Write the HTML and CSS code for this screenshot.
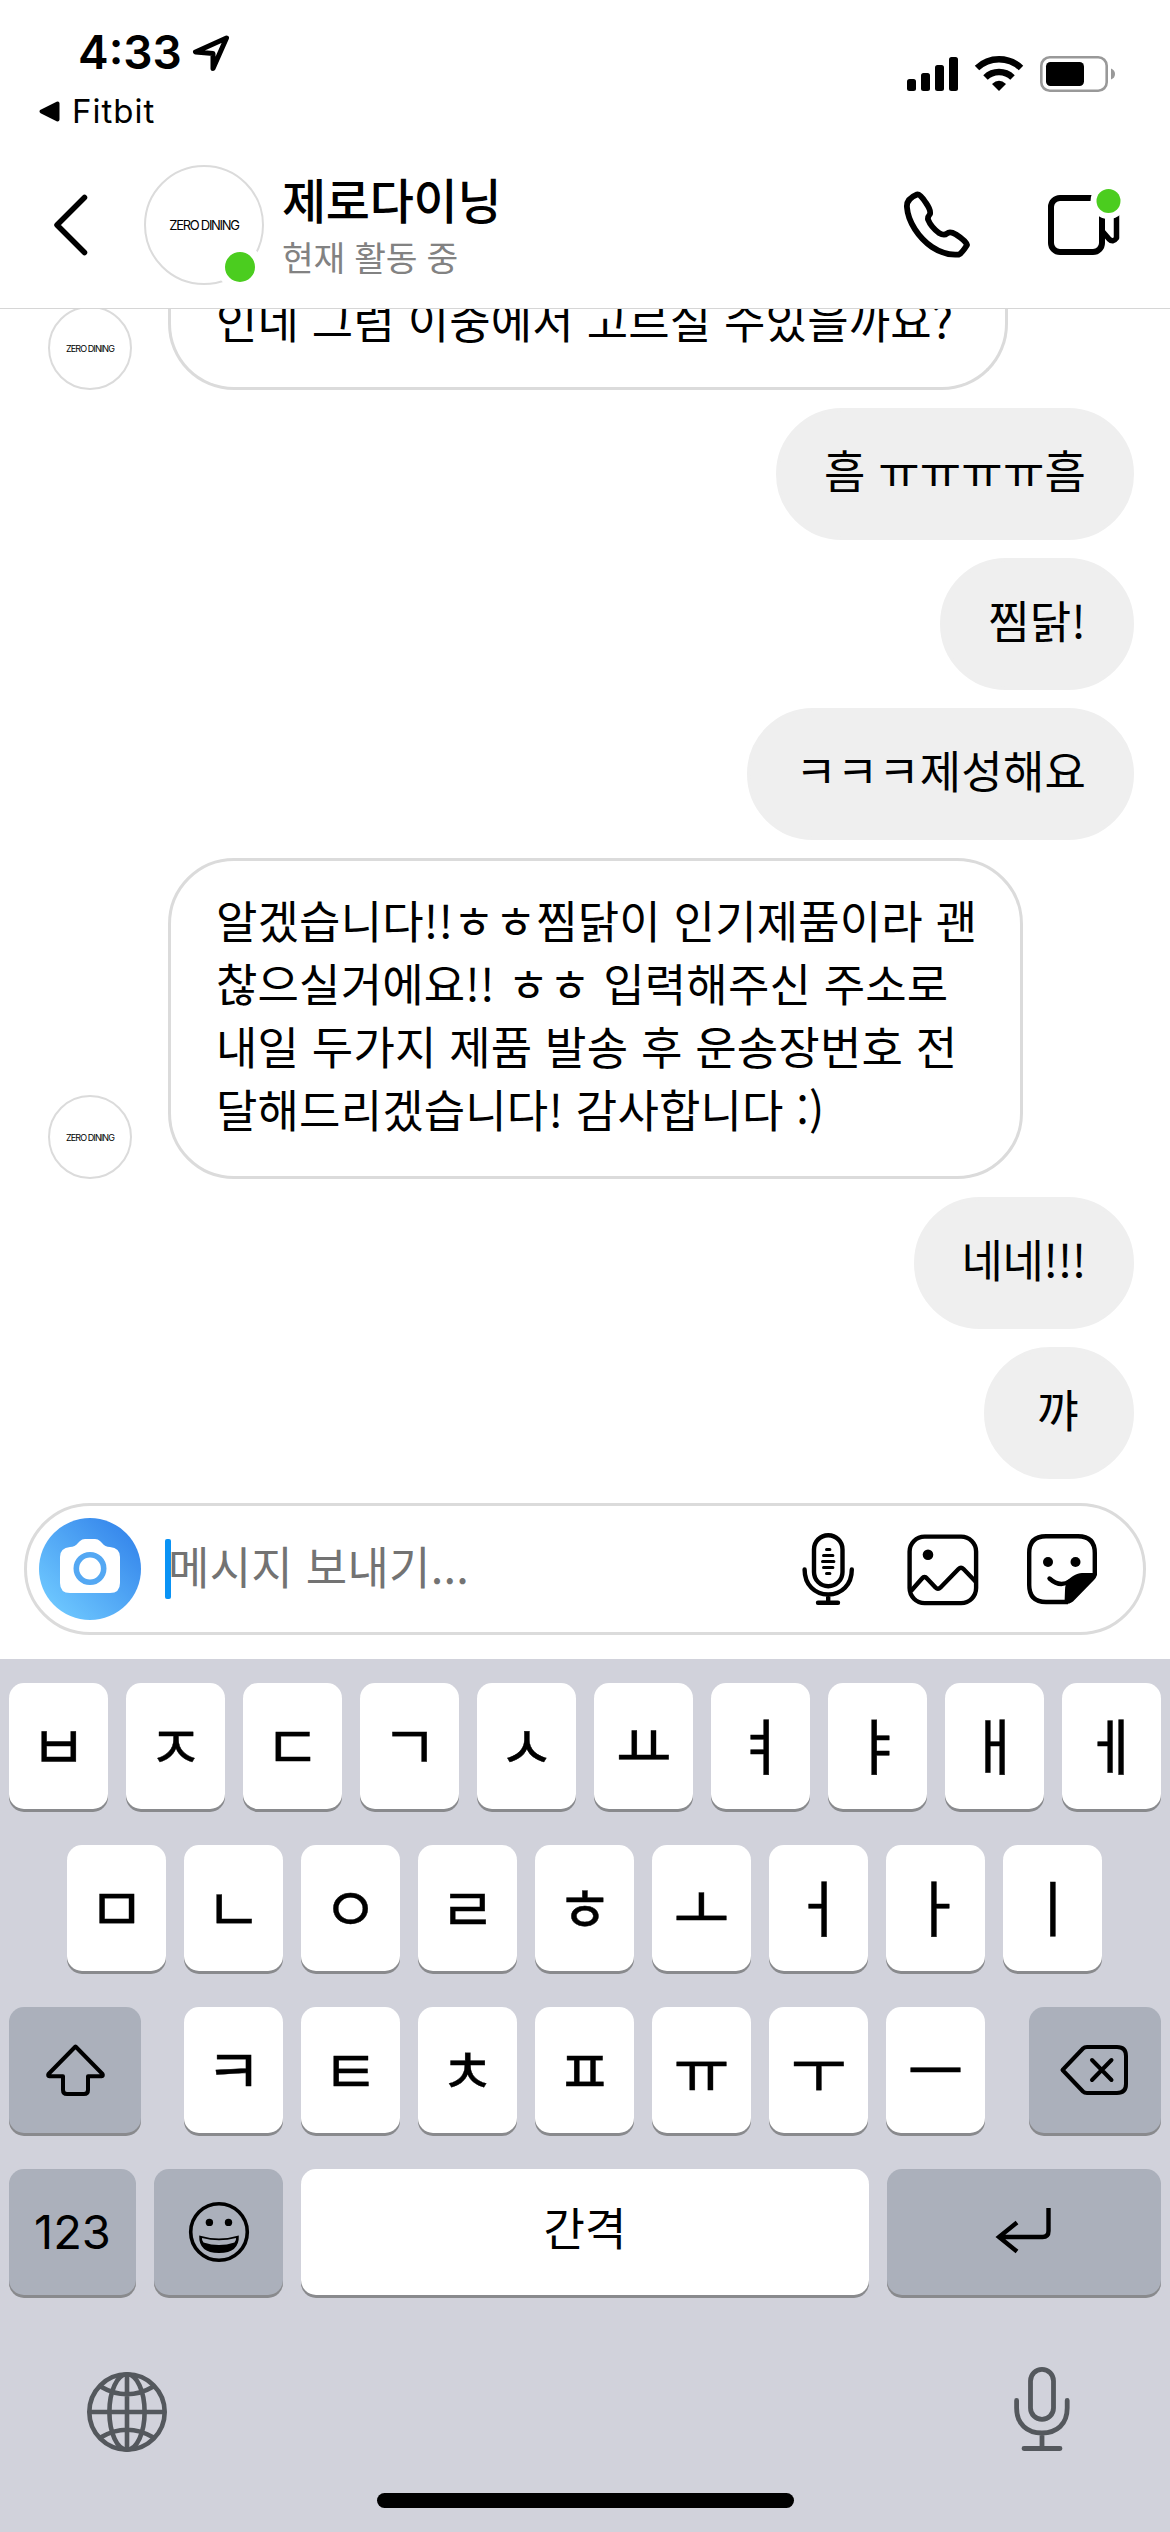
FILE: index.html
```html
<!DOCTYPE html>
<html lang="ko">
<head>
<meta charset="utf-8">
<title>제로다이닝</title>
<link rel="stylesheet" href="styles.css">
</head>
<body>
<div class="status">
  <div class="status-left">
    <div class="clock"><span class="time">4:33</span>
      <svg class="loc" width="40" height="40" viewBox="191 33 40 40"><path d="M226.500 38L195.500 52L213 53.500V68.500Z" fill="none" stroke="#000" stroke-width="5" stroke-linejoin="round"/></svg>
    </div>
    <div class="back-app">
      <svg width="22" height="22" viewBox="38 100 22 22"><path d="M57.500 103.500V119.500L41.500 111.500Z" stroke="#000" stroke-width="4" stroke-linejoin="round"/></svg>
      <span>Fitbit</span>
    </div>
  </div>
  <svg class="status-icons" width="212" height="44" viewBox="905 52 212 44">
    <rect x="907" y="79" width="9" height="12" rx="2.500"/><rect x="921" y="73" width="9" height="18" rx="2.500"/><rect x="935" y="65" width="9" height="26" rx="2.500"/><rect x="949" y="57" width="9" height="34" rx="2.500"/>
    <path d="M977 68A32 32 0 0 1 1021 68" fill="none" stroke="#000" stroke-width="6.500"/><path d="M985.500 77.500A19.500 19.500 0 0 1 1012.500 77.500" fill="none" stroke="#000" stroke-width="6.500"/><path d="M992 84Q999 77.500 1006 84L999 91Z"/>
    <rect x="1041.300" y="57.300" width="65.400" height="33.400" rx="8.500" fill="none" stroke="#999" stroke-width="2.600"/><rect x="1046" y="62" width="38" height="24" rx="4.500"/><path d="M1111 68.500Q1115 70 1115 74T1111 79.500Z" fill="#999"/>
  </svg>
</div>

<header class="header">
  <svg class="chevron" width="40" height="68" viewBox="50 191 40 68"><path d="M84.500 197.500L57 225L84.500 252.500" fill="none" stroke="#000" stroke-width="5.500" stroke-linecap="round" stroke-linejoin="round"/></svg>
  <div class="avatar big"><span class="logo">ZERO DINING</span><i class="online"></i></div>
  <div class="who"><div class="name">제로다이닝</div><div class="active">현재 활동 중</div></div>
  <svg width="72" height="76" viewBox="901 187 72 76"><path d="M917 194.500Q906 199 907 207.500C908 222 919 238 932 247C941 253 950 255.500 959 254.500Q962 253 967 245Q966 241 956 234.500Q950 231 947 233.500Q944 236 939 233Q931 227 928 219.500Q927.500 217 930 214Q931 210 926 203Q920 193.500 917 194.500Z" fill="none" stroke="#000" stroke-width="5.800" stroke-linejoin="round"/></svg>
  <svg class="video" width="76" height="76" viewBox="1045 187 76 76"><rect x="1051" y="198" width="51" height="54" rx="9" fill="none" stroke="#000" stroke-width="6"/><path d="M1103 232L1109 239Q1113 243 1116.500 238V210" fill="none" stroke="#000" stroke-width="5.500" stroke-linejoin="round"/><circle cx="1108.500" cy="201" r="18" fill="#fff"/><circle cx="1108.500" cy="201" r="12" fill="#4bcd1f"/></svg>
</header>

<main class="chat">
  <div class="row in"><div class="avatar"><span class="logo">ZERO DINING</span></div><div class="bubble cut">인네 그럼 이중에서 고르실 수있을까요?</div></div>
  <div class="row"><div class="bubble out">흠 ㅠㅠㅠㅠ흠</div></div>
  <div class="row"><div class="bubble out">찜닭!</div></div>
  <div class="row"><div class="bubble out">ㅋㅋㅋ제성해요</div></div>
  <div class="row in"><div class="avatar"><span class="logo">ZERO DINING</span></div><div class="bubble long">알겠습니다!!ㅎㅎ찜닭이 인기제품이라 괜<br>찮으실거에요!! ㅎㅎ 입력해주신 주소로<br>내일 두가지 제품 발송 후 운송장번호 전<br>달해드리겠습니다! 감사합니다 :)</div></div>
  <div class="row"><div class="bubble out exclaim">네네!!!</div></div>
  <div class="row"><div class="bubble out single">꺄</div></div>
</main>

<div class="composer">
  <div class="camera"><svg width="64" height="60" viewBox="58 1536 64 60"><path d="M70 1547Q75 1547 78 1543L80 1541Q82 1539 85 1539H95Q98 1539 100 1541L102 1543Q105 1547 110 1547Q120 1548 120 1557V1583Q120 1593 110 1593H70Q60 1593 60 1583V1557Q60 1548 70 1547Z" fill="#fff"/><circle cx="90" cy="1568.500" r="13.700" fill="none" stroke="#54a8f3" stroke-width="5.600"/></svg></div>
  <i class="caret"></i>
  <span class="placeholder">메시지 보내기...</span>
  <svg class="tool-mic" width="56" height="76" viewBox="800 1531 56 76" fill="none" stroke="#000" stroke-width="4.400" stroke-linecap="round"><rect x="814" y="1535.200" width="28.500" height="51" rx="14.200"/><path d="M804.600 1569.500C804.600 1585 815 1594.500 828.200 1594.500S851.800 1585 851.800 1569.500M828.200 1595V1602M818 1602.800H838"/><path d="M826.500 1549.600h3.400M823.500 1555.500h9.400M822.500 1561.500h11.400M823.500 1567.500h9.400M826.500 1573.500h3.400" stroke-width="3"/></svg>
  <svg class="tool-img" width="76" height="76" viewBox="905 1531 76 76" fill="none" stroke="#000" stroke-width="4.400"><rect x="909.600" y="1536.600" width="66.500" height="66.500" rx="15"/><circle cx="928" cy="1554.700" r="5.300" fill="#000" stroke="none"/><path d="M911 1591L922 1578.500Q924.500 1575.500 927 1578.500L935.500 1587.500Q938 1590 940.500 1587.500L958.500 1569Q961 1566.500 963.500 1569L976 1582" stroke-linejoin="round"/></svg>
  <svg width="76" height="76" viewBox="1024 1531 76 76" fill="none" stroke="#000" stroke-width="4.400"><path d="M1094.800 1575V1553Q1094.800 1536.200 1078 1536.200H1046Q1029.200 1536.200 1029.200 1553V1585Q1029.200 1602 1046 1602H1068"/><path d="M1049.500 1578.500Q1060 1588 1070 1581" stroke-linecap="round"/><path d="M1064.500 1604L1065 1590C1065 1586 1066 1583 1068 1580C1074 1574 1080 1572.500 1086 1573H1097V1575Q1096 1578 1094 1580L1073 1601.500Q1070 1604 1064.500 1604Z" fill="#000" stroke="none"/><circle cx="1048" cy="1562" r="5" fill="#000" stroke="none"/><circle cx="1075.500" cy="1562" r="5" fill="#000" stroke="none"/></svg>
</div>

<section class="keyboard">
  <div class="keys"><b>ㅂ</b><b>ㅈ</b><b>ㄷ</b><b>ㄱ</b><b>ㅅ</b><b>ㅛ</b><b>ㅕ</b><b>ㅑ</b><b>ㅐ</b><b>ㅔ</b></div>
  <div class="keys home-row"><b>ㅁ</b><b>ㄴ</b><b>ㅇ</b><b>ㄹ</b><b>ㅎ</b><b>ㅗ</b><b>ㅓ</b><b>ㅏ</b><b>ㅣ</b></div>
  <div class="keys edges">
    <b class="fn side"><svg width="64" height="60" viewBox="43 2040 64 60"><path d="M75.500 2046.500L102.500 2074Q103.500 2076 101.500 2076.200H88V2090Q88 2094 84 2094H67Q63 2094 63 2090V2076.200H49.500Q47.500 2076 48.500 2074Z" fill="none" stroke="#000" stroke-width="4" stroke-linejoin="round"/></svg></b>
    <div class="keys inner"><b>ㅋ</b><b>ㅌ</b><b>ㅊ</b><b>ㅍ</b><b>ㅠ</b><b>ㅜ</b><b>ㅡ</b></div>
    <b class="fn side"><svg width="72" height="56" viewBox="1059 2042 72 56" fill="none" stroke="#000" stroke-width="4" stroke-linejoin="round" stroke-linecap="round"><path d="M1062.500 2070L1083 2048.500Q1084.500 2047 1087 2047H1117Q1126 2047 1126 2056V2084Q1126 2093 1117 2093H1087Q1084.500 2093 1083 2091.500ZM1092 2060L1111.500 2080M1111.500 2060L1092 2080"/></svg></b>
  </div>
  <div class="keys bottom">
    <b class="fn num">123</b>
    <b class="fn"><svg width="64" height="64" viewBox="186 2200 64 64"><circle cx="218" cy="2232" r="28.300" fill="none" stroke="#000" stroke-width="3.600"/><circle cx="208.400" cy="2222.400" r="3.700"/><circle cx="227.500" cy="2222.400" r="3.700"/><path d="M198.200 2235.500Q218 2241.500 237.800 2235.500Q238.500 2253 218 2253T198.200 2235.500Z"/><path d="M201 2238Q218 2242.500 235 2238Q235.500 2240.500 233.500 2242.500Q218 2247.500 202.500 2242.500Q200.500 2240 201 2238Z" fill="#abb0bb"/></svg></b>
    <b class="space">간격</b>
    <b class="fn"><svg width="64" height="56" viewBox="992 2204 64 56"><path d="M1048.500 2208V2231Q1048.500 2237 1042.500 2237H999M1017 2222.500L999 2237L1017 2251.500" fill="none" stroke="#000" stroke-width="4.400"/></svg></b>
  </div>
  <div class="dock">
    <svg class="globe" width="84" height="84" viewBox="85 2370 84 84" fill="none" stroke="#54585d" stroke-width="4.600"><circle cx="127" cy="2412" r="37.700"/><ellipse cx="127" cy="2412" rx="17.600" ry="37.700"/><path d="M127 2374V2450M89 2412H165M100.500 2386.500Q127 2402 153.500 2386.500M100.500 2437.500Q127 2422 153.500 2437.500"/></svg>
    <svg width="62" height="90" viewBox="1011 2364 62 90" fill="none" stroke="#54585d" stroke-width="4.800" stroke-linecap="round"><rect x="1030.500" y="2369.400" width="23" height="50" rx="11.500"/><path d="M1016.600 2400.500V2408C1016.600 2424 1027 2433 1042 2433S1067.200 2424 1067.200 2408V2400.500M1042 2434V2447M1024 2448.500H1060"/></svg>
  </div>
  <div class="home"></div>
</section>
</body>
</html>
```
FILE: styles.css
```css
* { box-sizing: border-box; }
body {
  margin: 0;
  width: 1170px;
  height: 2532px;
  overflow: hidden;
  display: flex;
  flex-direction: column;
  background: #fff;
  color: #000;
  font-family: "Noto Sans CJK KR", sans-serif;
}
svg { display: block; flex: none; }

.status {
  height: 142px;
  flex: none;
  display: flex;
  justify-content: space-between;
  padding: 0 53px 0 38px;
  font-family: Inter, sans-serif;
}
.clock {
  display: flex;
  height: 73px;
  padding: 33px 0 0 40px;
}
.time { width: 113px; font-size: 46px; font-weight: 600; line-height: 39px; }
.back-app {
  display: flex;
  align-items: center;
  gap: 12px;
  margin-top: 18px;
  height: 40px;
  font-size: 33px;
  letter-spacing: 1px;
}
.status-icons { margin-top: 52px; }

.header {
  height: 167px;
  flex: none;
  display: flex;
  align-items: center;
  padding: 0 49px 0 50px;
  border-bottom: 1px solid #d6d6d6;
}
.avatar {
  width: 84px;
  height: 84px;
  flex: none;
  display: flex;
  align-items: center;
  justify-content: center;
  border: 2px solid #dbdbdb;
  border-radius: 50%;
  background: #fff;
}
.logo {
  font: 400 9px/1 Inter, sans-serif;
  letter-spacing: -0.9px;
  white-space: nowrap;
}
.avatar.big { position: relative; width: 120px; height: 120px; margin-left: 54px; }
.big .logo { font-size: 13px; letter-spacing: -1.3px; }
.online {
  position: absolute;
  right: -1px;
  bottom: -7px;
  width: 46px;
  height: 46px;
  border: 8px solid #fff;
  border-radius: 50%;
  background: #4bcd1f;
}
.who { flex: 1; margin: 2px 0 0 18px; }
.name { font-size: 48px; font-weight: 500; line-height: 60px; letter-spacing: -0.3px; }
.active { font-size: 34.500px; line-height: 56px; letter-spacing: -0.3px; color: #828282; }
.video { margin-left: 72px; }

.chat {
  height: 1170px;
  flex: none;
  overflow: hidden;
  display: flex;
  flex-direction: column;
  justify-content: flex-end;
  gap: 18px;
  padding: 0 36px 0 48px;
}
.row { display: flex; flex: none; justify-content: flex-end; }
.row.in { justify-content: flex-start; align-items: flex-end; gap: 36px; }
.bubble {
  padding: 27px 45px 36px;
  border: 3px solid #dbdbdb;
  border-radius: 66px;
  font-size: 45px;
  line-height: 63px;
  letter-spacing: 0.15px;
  white-space: nowrap;
}
.bubble.cut { width: 840px; border-top: 0; padding-top: 30px; border-radius: 0 0 66px 66px; }
.bubble.long { width: 855px; }
.bubble.out { border-color: #efefef; background: #efefef; }
.bubble.exclaim { letter-spacing: -0.4px; }
.bubble.single { width: 150px; padding-left: 50px; }

.composer {
  height: 132px;
  flex: none;
  margin: 24px;
  display: flex;
  align-items: center;
  padding: 0 43px 0 12px;
  border: 3px solid #dbdbdb;
  border-radius: 66px;
}
.camera {
  width: 102px;
  height: 102px;
  display: flex;
  align-items: center;
  justify-content: center;
  border-radius: 50%;
  background: linear-gradient(45deg, #6fc9ff 10%, #3485eb 90%);
}
.camera svg { margin-top: -6px; }
.caret { width: 6px; height: 60px; margin-left: 24px; border-radius: 2px; background: #0a93f5; }
.placeholder { flex: 1; margin: -8px 0 0 -3px; font-size: 45px; line-height: 63px; letter-spacing: 0.25px; color: #737373; }
.tool-img { margin: 0 43px 0 49px; }

.keyboard {
  height: 873px;
  flex: none;
  display: flex;
  flex-direction: column;
  gap: 36px;
  padding-top: 24px;
  background: #d1d2db;
}
.keys { display: flex; justify-content: center; gap: 18px; }
.keys b {
  width: 99px;
  height: 126px;
  display: flex;
  align-items: center;
  justify-content: center;
  border-radius: 15px;
  background: #fff;
  box-shadow: 0 3px 0 #898a8d;
  font-size: 61px;
  font-weight: 400;
  line-height: 122px;
  padding-bottom: 4px;
  -webkit-text-stroke: 0.4px #000;
}
.keys.home-row { padding-right: 1px; }
.keys.edges { justify-content: space-between; gap: 0; padding: 0 9px; }
.keys.inner { margin-right: 1px; }
.keys b.fn { background: #abb0bb; padding-bottom: 0; }
.keys b.side { width: 132px; }
.keys.bottom { display: grid; grid-template-columns: 127px 129px 568px 274px; }
.keys.bottom b { width: auto; -webkit-text-stroke: 0; }
.keys b.num { font: 400 47px/1 Inter, sans-serif; padding-bottom: 2px; }
.keys b.space { font-size: 45px; padding-bottom: 11px; }
.dock {
  display: flex;
  justify-content: space-between;
  align-items: center;
  height: 90px;
  margin-top: 33px;
  padding: 0 97px 0 85px;
}
.globe { margin-top: 6px; }
.home { width: 417px; height: 15px; margin: 3px 0 0 377px; border-radius: 8px; background: #000; }
```
